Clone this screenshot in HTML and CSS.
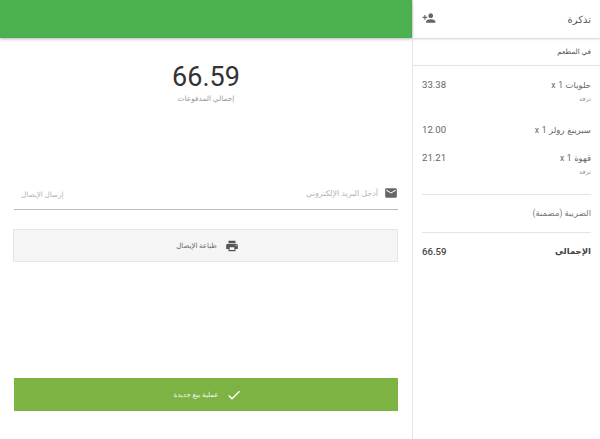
FILE: index.html
```html
<!DOCTYPE html>
<html>
<head>
    <title>تذكرة</title>
    <meta charset="utf-8">
    <link rel="stylesheet" href="styles.css">
</head>
<body>
    <div class="page">
        <div class="main">
            <div class="topbar"></div>
            <div class="content">
                <div class="total">
                    <div class="total-num">66.59</div>
                    <div class="total-label">إجمالي المدفوعات</div>
                </div>

                <div class="email-row">
                    <svg class="icon icon-email" viewBox="0 0 24 24"><path d="M20 4H4c-1.1 0-1.99.9-1.99 2L2 18c0 1.1.9 2 2 2h16c1.1 0 2-.9 2-2V6c0-1.1-.9-2-2-2zm0 4l-8 5-8-5V6l8 5 8-5v2z"/></svg>
                    <span class="email-hint">أدخل البريد الإلكتروني</span>
                    <span class="email-send">إرسال الإيصال</span>
                </div>

                <div class="btn btn-print">
                    <svg class="icon icon-print" viewBox="0 0 24 24"><path d="M19 8H5c-1.66 0-3 1.34-3 3v6h4v4h12v-4h4v-6c0-1.66-1.34-3-3-3zm-3 11H8v-5h8v5zm3-7c-.55 0-1-.45-1-1s.45-1 1-1 1 .45 1 1-.45 1-1 1zm-1-9H6v4h12V3z"/></svg>
                    <span>طباعة الإيصال</span>
                </div>

                <div class="btn btn-new">
                    <svg class="icon icon-check" viewBox="0 0 24 24"><path d="M9 16.17L4.83 12l-1.42 1.41L9 19 21 7l-1.41-1.41z"/></svg>
                    <span>عملية بيع جديدة</span>
                </div>
            </div>
        </div>

        <div class="ticket">
            <div class="ticket-head">
                <span class="ticket-title">تذكرة</span>
                <svg class="icon icon-person" viewBox="0 0 24 24"><path d="M15 12c2.21 0 4-1.79 4-4s-1.79-4-4-4-4 1.79-4 4 1.79 4 4 4zm-9-2V7H4v3H1v2h3v3h2v-3h3v-2H6zm9 4c-2.67 0-8 1.34-8 4v2h16v-2c0-2.66-5.33-4-8-4z"/></svg>
            </div>
            <div class="ticket-type">في المطعم</div>
            <div class="ticket-body">
                <div class="item">
                    <div>
                        <div class="item-name">حلويات 1 x</div>
                        <div class="item-note">ترقة</div>
                    </div>
                    <div class="item-price">33.38</div>
                </div>
                <div class="item item-plain">
                    <div>
                        <div class="item-name">سبرينغ رولز 1 x</div>
                    </div>
                    <div class="item-price">12.00</div>
                </div>
                <div class="item">
                    <div>
                        <div class="item-name">قهوة 1 x</div>
                        <div class="item-note">ترقة</div>
                    </div>
                    <div class="item-price">21.21</div>
                </div>
                <div class="tax">الضريبة (مضمنة)</div>
                <div class="grand">
                    <span>الإجمالي</span>
                    <span class="grand-num">66.59</span>
                </div>
            </div>
        </div>
    </div>
</body>
</html>
```

FILE: styles.css
```css
html, body { margin: 0; padding: 0; background: #fff; }
body { font-family: "Roboto", "DejaVu Sans", sans-serif; color: #333; }

.page { display: flex; width: 600px; height: 439px; overflow: hidden; }
.icon { display: block; fill: #666; flex: none; }

/* left side */
.main { width: 412px; flex: none; }
.topbar { height: 38px; background: #4caf50; box-shadow: 0 1px 3px rgba(0, 0, 0, 0.3); }
.content { padding: 0 14px 0 14px; }

.total { padding-top: 23px; text-align: center; }
.total-num { font-size: 27px; line-height: 32px; color: #333; }
.total-label { direction: rtl; font-size: 7.4px; line-height: 12px; color: #999; }

.email-row {
    direction: rtl;
    display: flex;
    align-items: center;
    height: 31px;
    margin-top: 73px;
    border-bottom: 1px solid #bbb;
    font-size: 8px;
    color: #b4b4b4;
}
.icon-email { width: 14px; height: 14px; margin-left: 6px; margin-right: 0; margin-bottom: 2px; }
.email-hint { flex: 1; }
.email-send { margin-left: 7px; margin-top: 1px; font-size: 7.2px; }

.btn {
    direction: rtl;
    display: flex;
    align-items: center;
    justify-content: center;
    gap: 8px;
    height: 33px;
    padding-left: 4px;
    box-sizing: border-box;
    font-size: 7px;
}
.btn-print {
    margin-top: 19px;
    margin-left: -1px;
    background: #f5f5f5;
    border: 1px solid #e6e6e6;
    color: #666;
}
.icon-print { width: 14px; height: 14px; fill: #555; }
.btn-new {
    margin-top: 116px;
    background: #7cb342;
    color: #f4f8ee;
}
.icon-check { width: 16px; height: 16px; fill: #fff; }

/* ticket */
.ticket { flex: 1; border-left: 1px solid #e4e4e4; direction: rtl; }
.ticket-head {
    display: flex;
    align-items: center;
    justify-content: space-between;
    height: 38px;
    padding: 0 9px;
    box-shadow: 0 1px 2px rgba(0, 0, 0, 0.2);
    font-size: 10px;
    color: #555;
}
.icon-person { width: 14px; height: 14px; margin-bottom: 2px; }
.ticket-type {
    height: 27px;
    line-height: 27px;
    padding: 0 9px;
    border-bottom: 1px solid #e4e4e4;
    font-size: 7.2px;
    color: #555;
}
.ticket-body { padding: 12px 9px 0; }

.item { display: flex; justify-content: space-between; height: 45px; font-size: 8.5px; color: #666; }
.item-plain { height: 28px; }
.item-name { line-height: 14px; word-spacing: 0.5px; }
.item-note { font-size: 6.5px; line-height: 14px; color: #999; }
.item-price { font-size: 9.6px; line-height: 14px; color: #666; }

.tax {
    margin-top: -2px;
    height: 37px;
    line-height: 37px;
    border-top: 1px solid #e4e4e4;
    border-bottom: 1px solid #e4e4e4;
    font-size: 8.5px;
    color: #777;
}
.grand {
    display: flex;
    justify-content: space-between;
    align-items: center;
    height: 36px;
    font-size: 8.5px;
    font-weight: bold;
    color: #444;
}
.grand-num { font-size: 9.6px; font-weight: 500; }
```
